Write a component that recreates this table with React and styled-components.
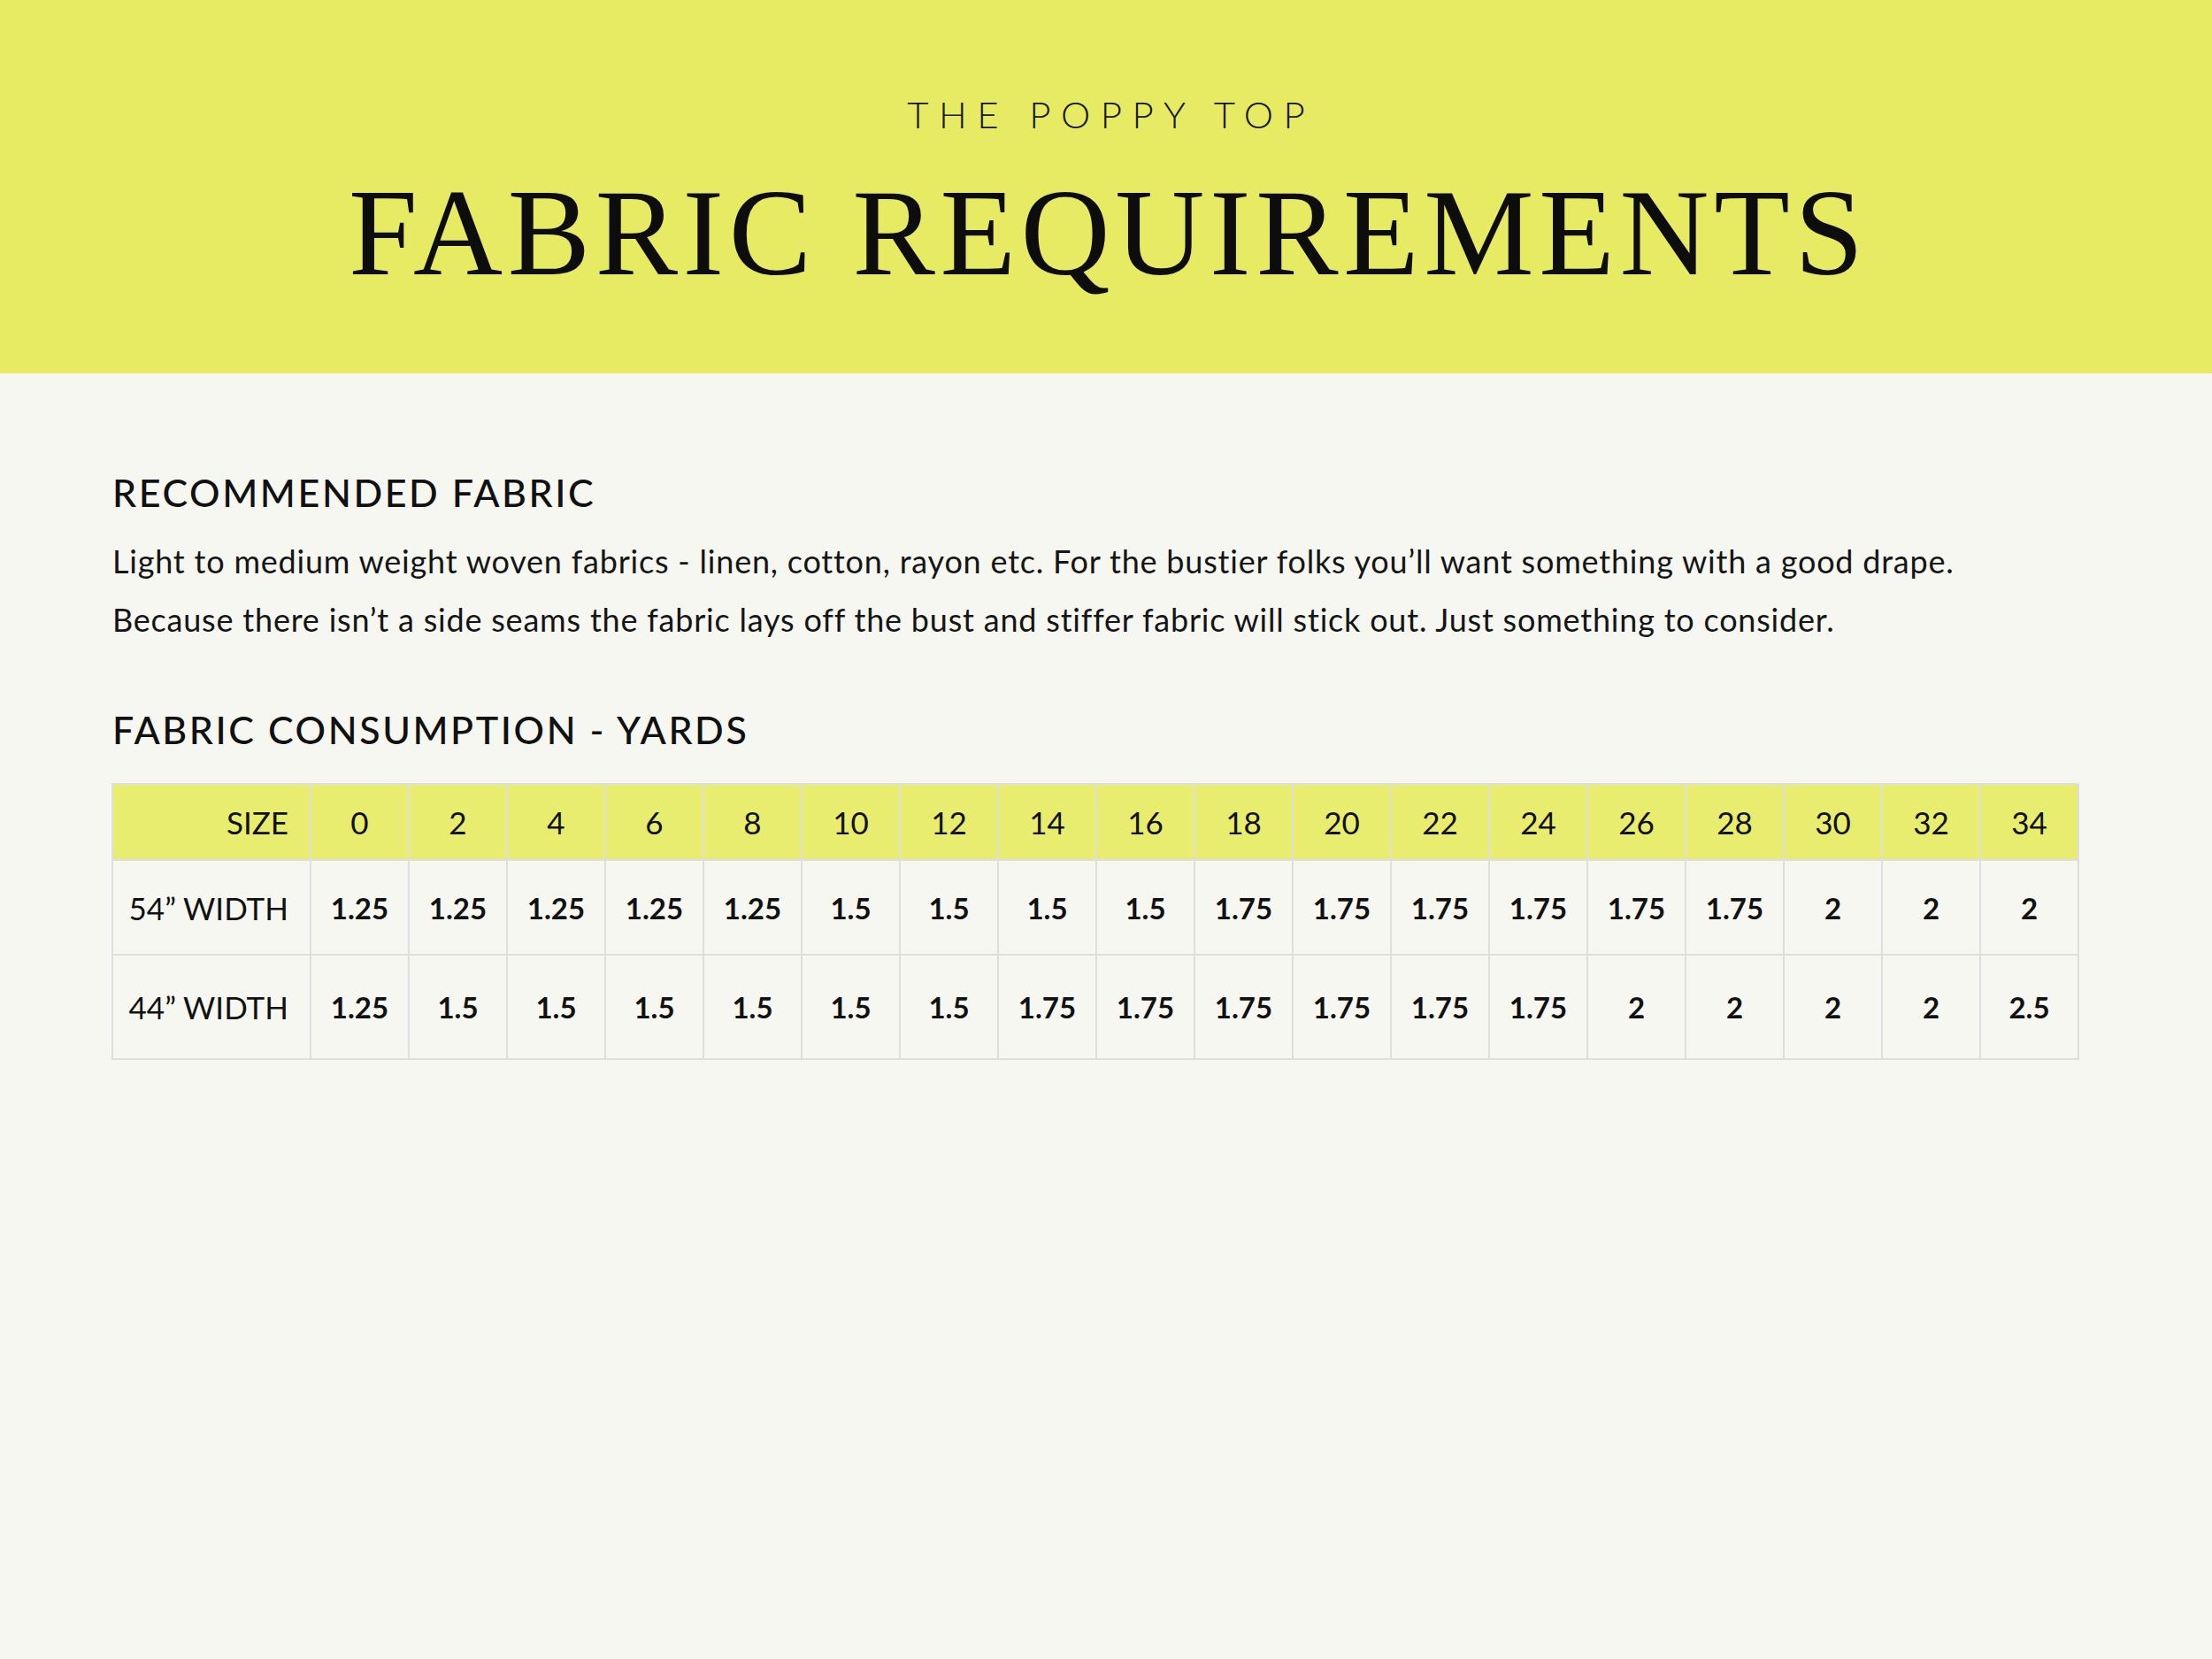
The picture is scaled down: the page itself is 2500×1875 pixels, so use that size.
import React from "react";
import styled, { createGlobalStyle } from "styled-components";

const Global = createGlobalStyle`
  html, body { margin: 0; padding: 0; background: #f7f7f2; }
  body { font-family: "Lato", "Liberation Sans", sans-serif; color: #111; }
`;

const Page = styled.div`
  min-height: 1875px;
  background: #f7f7f2;
`;

const Header = styled.header`
  height: 422px;
  background: #e7eb63;
  display: flex;
  flex-direction: column;
  align-items: center;
  padding-top: 108px;
  box-sizing: border-box;
`;

const Kicker = styled.div`
  font-family: "Lato", "Liberation Sans", sans-serif;
  font-weight: 300;
  font-size: 42px;
  line-height: 1;
  letter-spacing: 0.275em;
  margin-right: -0.275em;
  color: #151515;
`;

const Title = styled.h1`
  margin: 43px 0 0;
  font-family: "Liberation Serif", "Times New Roman", serif;
  font-weight: 400;
  font-size: 140px;
  line-height: 1;
  letter-spacing: 0.04em;
  margin-right: -0.04em;
  color: #0d0d0d;
`;

const Content = styled.main`
  padding: 113px 126px 0 126px;
`;

const SectionHeading = styled.h2`
  margin: ${(p) => p.$top || 0}px 0 0 1px;
  font-family: "Lato", "Liberation Sans", sans-serif;
  font-weight: 500;
  font-size: 43px;
  line-height: 1;
  letter-spacing: 0.06em;
  color: #111;
`;

const Paragraph = styled.p`
  margin: 23px 0 0 1px;
  font-size: 36px;
  line-height: 66px;
  font-weight: 400;
  letter-spacing: 0.022em;
  color: #151515;
  white-space: nowrap;
`;

const Table = styled.table`
  margin-top: 39px;
  border-collapse: collapse;
  table-layout: fixed;
  width: 2222px;
`;

const Row = styled.tr`
  height: ${(p) => p.$h}px;
  background: ${(p) => (p.$head ? "#e8ec6f" : "transparent")};
`;

const Cell = styled.td`
  box-sizing: border-box;
  border: 2px solid #dedede;
  padding: 0;
  text-align: center;
  font-size: ${(p) => (p.$head ? 35 : 33)}px;
  font-weight: ${(p) => (p.$head ? 400 : 700)};
  color: #111;
`;

const LabelCell = styled(Cell)`
  text-align: right;
  padding-right: 24px;
  font-size: 35px;
  font-weight: 400;
`;

const Col = styled.col`
  width: ${(p) => (p.$wide ? 224 : 111)}px;
`;

const sizes = ["0", "2", "4", "6", "8", "10", "12", "14", "16", "18", "20", "22", "24", "26", "28", "30", "32", "34"];
const rows = [
  {
    label: "54” WIDTH",
    h: 107,
    values: ["1.25", "1.25", "1.25", "1.25", "1.25", "1.5", "1.5", "1.5", "1.5", "1.75", "1.75", "1.75", "1.75", "1.75", "1.75", "2", "2", "2"],
  },
  {
    label: "44” WIDTH",
    h: 118,
    values: ["1.25", "1.5", "1.5", "1.5", "1.5", "1.5", "1.5", "1.75", "1.75", "1.75", "1.75", "1.75", "1.75", "2", "2", "2", "2", "2.5"],
  },
];

export default function App() {
  return (
    <Page>
      <Global />
      <Header>
        <Kicker>THE POPPY TOP</Kicker>
        <Title>FABRIC REQUIREMENTS</Title>
      </Header>
      <Content>
        <SectionHeading>RECOMMENDED FABRIC</SectionHeading>
        <Paragraph>
          Light to medium weight woven fabrics - linen, cotton, rayon etc. For the bustier folks you’ll want something with a good drape.
          <br />
          Because there isn’t a side seams the fabric lays off the bust and stiffer fabric will stick out. Just something to consider.
        </Paragraph>
        <SectionHeading $top={70}>FABRIC CONSUMPTION - YARDS</SectionHeading>
        <Table>
          <colgroup>
            <Col $wide />
            {sizes.map((s) => (
              <Col key={s} />
            ))}
          </colgroup>
          <tbody>
            <Row $head $h={86}>
              <LabelCell $head>SIZE</LabelCell>
              {sizes.map((s) => (
                <Cell key={s} $head>
                  {s}
                </Cell>
              ))}
            </Row>
            {rows.map((r) => (
              <Row key={r.label} $h={r.h}>
                <LabelCell>{r.label}</LabelCell>
                {r.values.map((v, i) => (
                  <Cell key={i}>{v}</Cell>
                ))}
              </Row>
            ))}
          </tbody>
        </Table>
      </Content>
    </Page>
  );
}
